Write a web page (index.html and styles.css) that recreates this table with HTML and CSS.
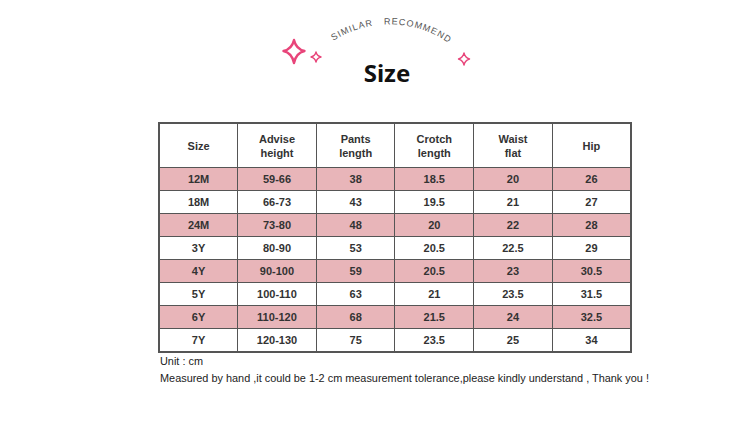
FILE: index.html
```html
<!DOCTYPE html>
<html>
  <head>
    <meta charset="utf-8" />
    <link rel="stylesheet" href="styles.css">
  </head>
  <body>
    <div class="head">
      <svg class="badge" width="200" height="60" viewBox="0 0 200 60">
        <defs>
          <path id="arc" d="M40 41 A104 104 0 0 1 180 42" />
        </defs>
        <text class="arc-text">
          <textPath href="#arc" startOffset="51%" text-anchor="middle">SIMILAR&#160;&#160;&#160;RECOMMEND</textPath>
        </text>
        <path class="spark spark-big" d="M14 30 Q16 39 24.5 41 Q16 43 14 53 Q12 43 3.5 41 Q12 39 14 30 Z" />
        <path class="spark" d="M36 42 Q37 46 41 47 Q37 48 36 52 Q35 48 31 47 Q35 46 36 42 Z" />
        <path class="spark" d="M184 43 Q185 47.5 189.5 49 Q185 50.5 184 55 Q183 50.5 178.5 49 Q183 47.5 184 43 Z" />
      </svg>
      <h1 class="title">Size</h1>
    </div>

    <table class="chart">
      <tr class="chart-head">
        <th>Size</th>
        <th>Advise<br>height</th>
        <th>Pants<br>length</th>
        <th>Crotch<br>length</th>
        <th>Waist<br>flat</th>
        <th>Hip</th>
      </tr>
      <tr class="pink"><td>12M</td><td>59-66</td><td>38</td><td>18.5</td><td>20</td><td>26</td></tr>
      <tr><td>18M</td><td>66-73</td><td>43</td><td>19.5</td><td>21</td><td>27</td></tr>
      <tr class="pink"><td>24M</td><td>73-80</td><td>48</td><td>20</td><td>22</td><td>28</td></tr>
      <tr><td>3Y</td><td>80-90</td><td>53</td><td>20.5</td><td>22.5</td><td>29</td></tr>
      <tr class="pink"><td>4Y</td><td>90-100</td><td>59</td><td>20.5</td><td>23</td><td>30.5</td></tr>
      <tr><td>5Y</td><td>100-110</td><td>63</td><td>21</td><td>23.5</td><td>31.5</td></tr>
      <tr class="pink"><td>6Y</td><td>110-120</td><td>68</td><td>21.5</td><td>24</td><td>32.5</td></tr>
      <tr><td>7Y</td><td>120-130</td><td>75</td><td>23.5</td><td>25</td><td>34</td></tr>
    </table>

    <div class="notes">
      <div class="unit">Unit : cm</div>
      <div class="note">Measured by hand ,it could be 1-2 cm measurement tolerance,please kindly understand , Thank you !</div>
    </div>
  </body>
</html>
```

FILE: styles.css
```css
body {
  margin: 0;
  width: 750px;
  height: 446px;
  background: #fff;
  font-family: 'Liberation Sans', Arial, sans-serif;
  color: #333;
  overflow: hidden;
}

.head {
  position: relative;
  padding-top: 57px;
  padding-left: 24px;
  text-align: center;
}

.badge {
  position: absolute;
  left: 280px;
  top: 10px;
}

.arc-text {
  font-family: 'Liberation Sans', Arial, sans-serif;
  font-size: 9px;
  letter-spacing: 1px;
  fill: #555;
}

.spark {
  fill: none;
  stroke: #e8457a;
  stroke-width: 1.4;
  stroke-linejoin: round;
}

.spark-big {
  stroke-width: 2.4;
}

.title {
  margin: 0;
  font-family: 'Noto Sans', sans-serif;
  font-size: 24px;
  font-weight: bold;
  line-height: 32px;
  color: #111;
}

.chart {
  width: 474px;
  table-layout: fixed;
  margin: 33px 0 0 158px;
  border-collapse: collapse;
  border: 2px solid #555;
}

.chart th,
.chart td {
  padding: 0;
  border: 1px solid #555;
  text-align: center;
  font-size: 11px;
  font-weight: bold;
  color: #333;
}

.chart th {
  height: 43px;
  line-height: 14px;
}

.chart td {
  height: 22px;
}

.chart .pink td {
  background: #e8b5b9;
}

.notes {
  margin-left: 160px;
  font-size: 10.9px;
  color: #222;
  line-height: 16px;
}

.note {
  padding-top: 1px;
}
```
